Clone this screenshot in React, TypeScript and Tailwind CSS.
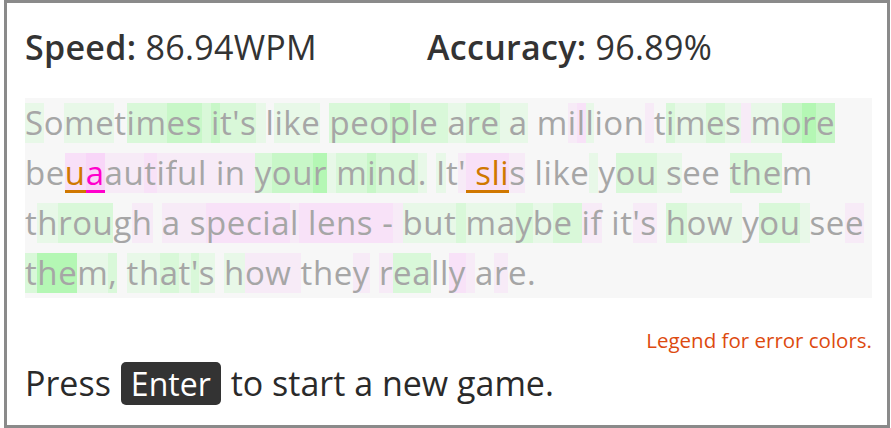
const lines: [string, string][] = [
  [
    "Sometimes it's like people are a million times more",
    "101102233" + "2" + "3222" + "1" + "0111" + "0" + "222322" + "2" + "122" + "1" + "1" + "0" + "0ab1000" + "a" + "02121" + "a" + "1343",
  ],
  [
    "beuaautiful in your mind. It' slis like you see them",
    "00" + "OM" + "aabaaaa" + "a" + "aa" + "a" + "2334" + "1" + "23221" + "0" + "10a" + "OOOO" + "a" + "0" + "0000" + "1" + "022" + "1" + "100" + "0" + "2220",
  ],
  [
    "through a special lens - but maybe if it's how you see",
    "012220a" + "0" + "a" + "a" + "abbbbba" + "b" + "bbbb" + "b" + "b" + "a" + "111" + "2" + "11212" + "2" + "aa" + "0" + "00aa" + "0" + "211" + "1" + "022" + "1" + "00a",
  ],
  [
    "them, that's how they really are.",
    "24412" + "0" + "112121" + "0" + "1aa" + "a" + "000a" + "0" + "a2200b" + "a" + "0a00",
  ],
];

const styles: Record<string, string> = {
  "0": "",
  "1": "bg-[#e8f8e8]",
  "2": "bg-[#d9f8d9]",
  "3": "bg-[#c8f7c8]",
  "4": "bg-[#b4f7b4]",
  a: "bg-[#f7ebf7]",
  b: "bg-[#f8e2f8]",
  c: "bg-[#f8d6f8]",
  O: "bg-[#f8e0f8] text-[#d07800] border-b-[3px] border-[#d07800]",
  M: "bg-[#f8d6f8] text-[#ff00cc] border-b-[3px] border-[#ff00cc]",
};

function Line({ text, codes }: { text: string; codes: string }) {
  return (
    <div className="flex h-[50px] items-center">
      {text.split("").map((ch, i) => (
        <span key={i} className={`h-[40px] leading-[40px] whitespace-pre ${styles[codes[i]] ?? ""}`}>
          {ch}
        </span>
      ))}
    </div>
  );
}

export default function App() {
  return (
    <div className="pl-[4px] bg-white" style={{ fontFamily: '"Open Sans", sans-serif' }}>
      <div className="w-[886px] h-[428px] border-[3px] border-[#8a8a8a] pl-[18px] pr-[15px] pt-[21px] bg-white">
        <div className="flex h-[46px] items-center text-[34px] tracking-[0.3px] text-[#333]">
          <div className="w-[402px]">
            <span className="font-semibold">Speed:</span> 86.94WPM
          </div>
          <div>
            <span className="font-semibold">Accuracy:</span> 96.89%
          </div>
        </div>
        <div className="mt-[28px] bg-[#f7f7f7] text-[33px] tracking-[0.55px] text-[#a6a6a6]">
          {lines.map(([t, c], i) => (
            <Line key={i} text={t} codes={c} />
          ))}
        </div>
        <div className="mt-[30px] h-[24px] leading-[24px] text-right text-[20.5px] text-[#dd4a10]">
          Legend for error colors.
        </div>
        <div className="mt-[6px] flex h-[50px] items-center gap-[10px] text-[34px] text-[#2a2a2a]">
          <span>Press</span>
          <span className="rounded-[5px] bg-[#333] px-[10px] h-[43px] leading-[43px] text-[32px] text-white">Enter</span>
          <span>to start a new game.</span>
        </div>
      </div>
    </div>
  );
}
